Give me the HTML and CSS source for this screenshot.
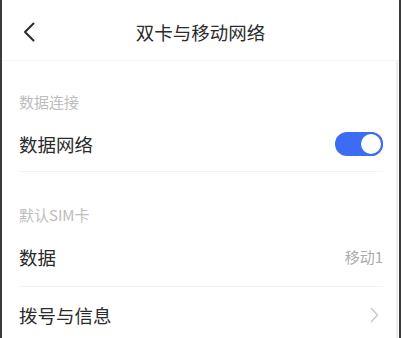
FILE: index.html
```html
<!DOCTYPE html>
<html lang="zh">
<head>
<meta charset="utf-8">
<link rel="stylesheet" href="styles.css">
</head>
<body>
<div class="frame">
  <header class="topbar">
    <svg class="back" width="14" height="20" viewBox="0 0 14 20"><path d="M11.5 1.5 L3 10 L11.5 18.5" fill="none" stroke="#2a2a2a" stroke-width="2" stroke-linecap="round" stroke-linejoin="round"/></svg>
    <h1 class="title">双卡与移动网络</h1>
    <span></span>
  </header>
  <main class="content">
    <div class="section-label first">数据连接</div>
    <div class="row r1">
      <span class="row-title">数据网络</span>
      <span class="toggle"><span class="knob"></span></span>
    </div>
    <div class="section-label">默认SIM卡</div>
    <div class="row r2">
      <span class="row-title">数据</span>
      <span class="row-value">移动1</span>
    </div>
    <div class="row last">
      <span class="row-title">拨号与信息</span>
      <svg class="chev" width="9" height="16" viewBox="0 0 9 16"><path d="M1.5 1.5 L7.5 8 L1.5 14.5" fill="none" stroke="#c8c8c8" stroke-width="1.4" stroke-linecap="round" stroke-linejoin="round"/></svg>
    </div>
  </main>
</div>
</body>
</html>
```

FILE: styles.css
```css
html, body {
  margin: 0;
  padding: 0;
  background: #fff;
}
body {
  font-family: "Noto Sans CJK SC", "Noto Sans", sans-serif;
  color: #2b2b2b;
  width: 401px;
  height: 338px;
  overflow: hidden;
}
.frame {
  box-sizing: border-box;
  width: 401px;
  height: 338px;
  border-left: 2px solid #3a3a3a;
  border-right: 2px solid #3a3a3a;
  background: #fff;
  display: flex;
  flex-direction: column;
  overflow: hidden;
}
.topbar {
  flex: none;
  height: 61px;
  padding-top: 4px;
  box-sizing: border-box;
  display: grid;
  grid-template-columns: 1fr auto 1fr;
  align-items: center;
  border-bottom: 1px solid #f5f5f5;
}
.back {
  margin-left: 20px;
}
.title {
  margin: 0;
  font-size: 18.5px;
  line-height: 24px;
  font-weight: 400;
  color: #2b2b2b;
}
.content {
  flex: 1 0 auto;
  padding: 0 13px 0 17px;
  border-right: 2px solid #ececec;
  margin-right: 1px;
}
.section-label {
  font-size: 15px;
  color: #bdbdbd;
  line-height: 20px;
  padding-top: 33px;
}
.section-label.first {
  padding-top: 31px;
}
.row {
  display: flex;
  align-items: center;
  justify-content: space-between;
  box-sizing: border-box;
  border-bottom: 1px solid #f3f3f3;
}
.r1 {
  height: 60px;
  padding-top: 4px;
}
.r2 {
  height: 62px;
  padding-top: 2px;
}
.row.last {
  height: 56px;
  border-bottom: none;
}
.row-title {
  font-size: 18.5px;
  color: #2b2b2b;
}
.row-value {
  font-size: 15px;
  color: #ababab;
}
.toggle {
  width: 48px;
  height: 24px;
  border-radius: 12px;
  background: #3a6cf4;
  display: flex;
  justify-content: flex-end;
  align-items: center;
}
.knob {
  width: 20px;
  height: 20px;
  border-radius: 50%;
  background: #fff;
  border: 2px solid #3a6cf4;
}
.chev {
  margin-right: 4px;
}
```
